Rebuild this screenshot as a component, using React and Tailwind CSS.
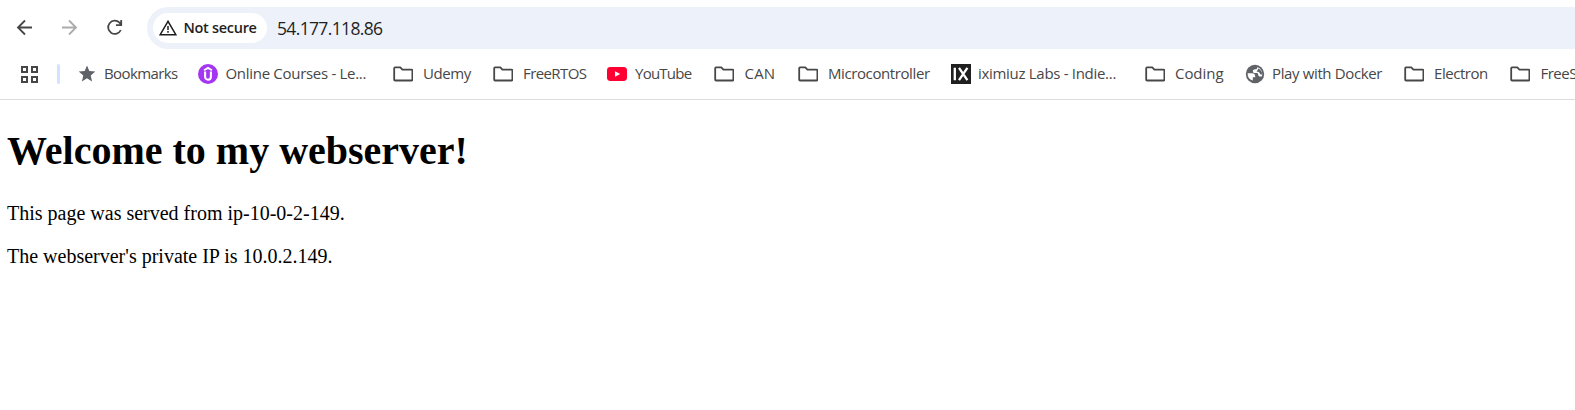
const FolderIcon = () => (
  <svg className="size-full" viewBox="0 0 20 20" fill="none" stroke="#474747" strokeWidth="1.8" strokeLinejoin="round">
    <path d="M1.2 4.2a.8.8 0 0 1 .8-.8h5.3l2.1 2.2H18.6a.8.8 0 0 1 .8.8v9.3a.8.8 0 0 1-.8.8H2a.8.8 0 0 1-.8-.8z" />
  </svg>
);

const StarIcon = () => (
  <svg className="size-full" viewBox="0 0 20 20" fill="#5f6368">
    <path d="M10 1.6l2.300 5.500 6 .500-4.600 4 1.400 5.900-5.100-3.200-5.100 3.200 1.400-5.900-4.600-4 6-.500z" />
  </svg>
);

const UdemyIcon = () => (
  <svg className="size-full" viewBox="0 0 20 20">
    <circle cx="10" cy="10" r="10" fill="#a435f0" />
    <g fill="none" stroke="#fff">
      <path d="M6 6.200L10 3.900l4 2.300" strokeWidth="1.800" />
      <path d="M7.100 7.600v5.200a2.900 2.900 0 0 0 5.800 0V7.600" strokeWidth="2.100" />
    </g>
  </svg>
);

const YouTubeIcon = () => (
  <svg className="size-full" viewBox="0 0 20 20">
    <rect x="0" y="3" width="20" height="14" rx="3.4" fill="#ff0033" />
    <path d="M8 7.200l5.200 2.800L8 12.800z" fill="#fff" />
  </svg>
);

const IximiuzIcon = () => (
  <svg className="size-full" viewBox="0 0 20 20">
    <rect width="20" height="20" fill="#1f1f1f" />
    <path d="M3.800 3.800v12.400M8 3.800l8.400 12.400M16.400 3.800L8 16.200" fill="none" stroke="#fff" strokeWidth="2.300" />
  </svg>
);

const GlobeIcon = () => (
  <svg className="size-full" viewBox="0 0 20 20">
    <circle cx="10" cy="10" r="9.200" fill="#5f6368" />
    <path d="M2.600 9.200h4.600c1.900 0 3 1.300 3 3v1.100H7.800v3.300A7.500 7.500 0 0 1 2.600 9.200z" fill="#fff" />
    <path d="M12.400 3c0 1.500-.700 2.300-2 2.300-1.700 0-2.500.800-2.500 1.900 0 1.300 1 1.900 2.300 1.900h1.300c1 0 1.700.700 1.700 1.600 0 1.200.800 1.800 1.900 1.800h1.700A7.500 7.500 0 0 0 12.400 3z" fill="#fff" />
    <path d="M13.200 4.600c2.600 1.200 4 3.300 4 5.800h-1.700c-.700-1.900-2-2.900-4-2.900.900-.900 1.500-1.700 1.700-2.900z" fill="#5f6368" />
  </svg>
);

const bookmarks = [
  { label: "Bookmarks", Icon: StarIcon, box: "w-[121px] gap-[7px]", text: "tracking-[-0.6px]" },
  { label: "Online Courses - Le...", Icon: UdemyIcon, box: "w-[195px] gap-[7.5px]", text: "tracking-[-0.3px]" },
  { label: "Udemy", Icon: FolderIcon, box: "w-[100px] gap-[10px]", text: "tracking-[-0.4px]" },
  { label: "FreeRTOS", Icon: FolderIcon, box: "w-[114px] gap-[10px]", text: "tracking-[-0.6px]" },
  { label: "YouTube", Icon: YouTubeIcon, box: "w-[107px] gap-[8px]", text: "tracking-[-0.75px]" },
  { label: "CAN", Icon: FolderIcon, box: "w-[84px] gap-[10.5px]", text: "tracking-[0.2px]" },
  { label: "Microcontroller", Icon: FolderIcon, box: "w-[153px] gap-[10px]", text: "tracking-[-0.4px]" },
  { label: "iximiuz Labs - Indie...", Icon: IximiuzIcon, box: "w-[194px] gap-[7px]", text: "tracking-[-0.3px]" },
  { label: "Coding", Icon: FolderIcon, box: "w-[100px] gap-[10px]", text: "tracking-[-0.05px]" },
  { label: "Play with Docker", Icon: GlobeIcon, box: "w-[159px] gap-[7px]", text: "tracking-[-0.37px]" },
  { label: "Electron", Icon: FolderIcon, box: "w-[106px] gap-[10px]", text: "tracking-[-0.45px]" },
  { label: "FreeS", Icon: FolderIcon, box: "w-[66px] gap-[10.5px]", text: "tracking-[-0.5px]" },
];

function Toolbar() {
  return (
    <div className="flex h-[49px] items-end">
      <div className="flex h-[42px] w-[147px] shrink-0 items-center pl-[15px]">
        <svg className="size-5 shrink-0" viewBox="0 0 20 20" fill="none" stroke="#474747" strokeWidth="1.8">
          <path d="M17 9.500H3.500M10 2.500l-7 7 7 7" />
        </svg>
        <svg className="ml-[25px] size-5 shrink-0" viewBox="0 0 20 20" fill="none" stroke="#ababab" strokeWidth="1.8">
          <path d="M2 9.500h13.500M9 2.500l7 7-7 7" />
        </svg>
        <svg className="ml-[25px] size-5 shrink-0" viewBox="0 0 20 20" fill="none" stroke="#474747" strokeWidth="1.8">
          <path d="M15.800 12A6.600 6.600 0 1 1 14.500 4.700L16 6.500M16.200 2v5.200H11" />
        </svg>
      </div>
      <div className="flex h-[42px] flex-1 items-center rounded-l-full bg-[#edf1fa] pl-[6px]">
        <div className="flex h-[30px] w-[114px] items-center rounded-full bg-white pl-[6px]">
          <svg className="size-[18px] shrink-0" viewBox="0 0 18 18" fill="none" stroke="#1f1f1f" strokeWidth="1.500">
            <path d="M9 2.300L1.200 15.700h15.600zM9 7v4M9 12v1.700" />
          </svg>
          <span className="ml-[6.5px] text-[14.5px] leading-5 font-semibold tracking-[-0.3px] whitespace-nowrap text-[#1f1f1f]">Not secure</span>
        </div>
        <span className="ml-[10px] text-[17.5px] leading-6 tracking-[-0.65px] text-[#1f1f1f]">54.177.118.86</span>
      </div>
    </div>
  );
}

function BookmarksBar() {
  return (
    <div className="flex h-[51px] items-center overflow-hidden border-b border-[#dcdcdc]">
      <svg className="ml-[20px] size-[19px] shrink-0" viewBox="0 0 19 19" fill="none" stroke="#474747" strokeWidth="2">
        <path d="M2 2h5v5H2zM12 2h5v5h-5zM2 12h5v5H2zM12 12h5v5h-5z" />
      </svg>
      <div className="mr-[17px] ml-[18px] h-5 w-[3px] shrink-0 rounded-full bg-[#d3e3fd]" />
      {bookmarks.map(({ label, Icon, box, text }) => (
        <div key={label} className={`flex shrink-0 items-center ${box}`}>
          <div className="size-5 shrink-0"><Icon /></div>
          <span className={`pb-[2px] text-[15px] leading-5 whitespace-nowrap text-[#474747] ${text}`}>{label}</span>
        </div>
      ))}
    </div>
  );
}

export default function App() {
  return (
    <div className="flex h-[410px] w-[1575px] flex-col overflow-hidden bg-white font-['Open_Sans',sans-serif]">
      <Toolbar />
      <BookmarksBar />
      <main className="px-[7px] pt-7 font-['Liberation_Serif',serif] text-black">
        <h1 className="text-[40px] leading-[46px] font-bold">Welcome to my webserver!</h1>
        <p className="mt-7 text-[20px] leading-[23px]">This page was served from ip-10-0-2-149.</p>
        <p className="mt-5 text-[20px] leading-[23px]">The webserver's private IP is 10.0.2.149.</p>
      </main>
    </div>
  );
}
